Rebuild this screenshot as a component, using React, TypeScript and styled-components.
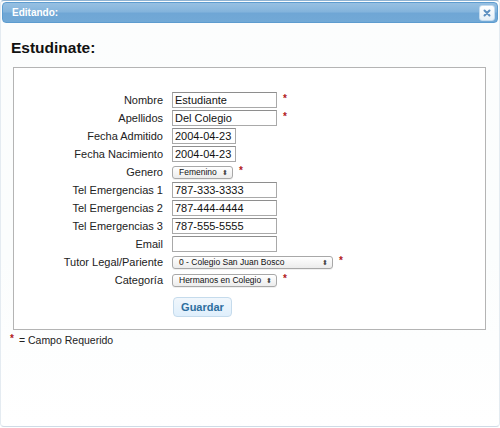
import * as React from 'react';
import styled, { createGlobalStyle } from 'styled-components';

const GlobalStyle = createGlobalStyle`
    html, body {
        margin: 0;
        padding: 0;
        background: #ffffff;
    }
    body {
        font-family: "Liberation Sans", Arial, sans-serif;
        font-size: 11px;
        color: #222;
    }
`;

const Dialog = styled.div`
    width: 500px;
    height: 427px;
    box-sizing: border-box;
    border: 1px solid #e4ebf1;
    border-top-color: #8fb3d3;
    border-bottom-color: #cfdbe6;
    border-radius: 4px;
    background: linear-gradient(#fcfdfd, #fbfdfd 60%, #ffffff);
    padding: 1px;
    display: flex;
    flex-direction: column;
`;

const TitleBar = styled.div`
    height: 21px;
    box-sizing: border-box;
    border: 1px solid #5d9ccf;
    border-radius: 4px;
    background: linear-gradient(#97c0e2 0%, #84b4dc 45%, #6fa6d5 55%, #72a9d6 100%);
    display: flex;
    align-items: center;
    justify-content: space-between;
    padding: 0 2px 0 9px;
`;

const Title = styled.span`
    color: #ffffff;
    font-weight: bold;
    font-size: 10px;
`;

const CloseButton = styled.button`
    width: 16px;
    height: 16px;
    padding: 0;
    border: 1px solid #c3dbef;
    border-radius: 3px;
    background: linear-gradient(#ffffff, #e6f0f8);
    display: flex;
    align-items: center;
    justify-content: center;
    cursor: pointer;
`;

const Body = styled.div`
    padding: 15px 12px 0 8px;
    display: flex;
    flex-direction: column;
`;

const Heading = styled.h2`
    margin: 0 0 9px 1px;
    font-size: 15.5px;
    font-weight: bold;
    color: #111;
    line-height: 20px;
`;

const FormBox = styled.div`
    margin-left: 3px;
    border: 1px solid #b4b4b4;
    background: #ffffff;
    height: 263px;
    box-sizing: border-box;
    padding-top: 24px;
`;

const FormGrid = styled.div`
    display: grid;
    grid-template-columns: 149px auto;
    column-gap: 9px;
    row-gap: 2px;
    align-items: center;
`;

const Label = styled.label`
    text-align: right;
    font-size: 11px;
    color: #222;
    line-height: 16px;
    white-space: nowrap;
`;

const Field = styled.div`
    display: flex;
    align-items: center;
    gap: 6px;
    height: 16px;
`;

const TextBox = styled.input<{ $w: number }>`
    width: ${(p) => p.$w}px;
    height: 16px;
    box-sizing: border-box;
    border: 1px solid #a9a9a9;
    border-top-color: #8e8e8e;
    padding: 0 2px;
    font-family: "Liberation Sans", Arial, sans-serif;
    font-size: 11px;
    color: #111;
    background: #fff;
    outline: none;
`;

const SelectBox = styled.div<{ $w: number }>`
    width: ${(p) => p.$w}px;
    height: 13px;
    box-sizing: border-box;
    border: 1px solid #a8a8a8;
    border-radius: 3px;
    background: linear-gradient(#ffffff, #ececec);
    display: flex;
    align-items: center;
    justify-content: space-between;
    padding: 0 4px 0 6px;
    font-size: 8.5px;
    color: #111;
    white-space: nowrap;
    box-shadow: 0 1px 0 rgba(0, 0, 0, 0.06);
`;

const Arrows = styled.span`
    font-size: 7px;
    color: #444;
    line-height: 1;
`;

const Required = styled.span`
    color: #b0191c;
    font-size: 10px;
    font-weight: bold;
    line-height: 1;
    position: relative;
    top: -1px;
`;

const ButtonRow = styled.div`
    padding: 9px 0 0 159px;
`;

const SaveButton = styled.button`
    width: 59px;
    height: 20px;
    border: 1px solid #c5dbec;
    border-radius: 4px;
    background: linear-gradient(#f1f7fc, #dfeffc);
    color: #2e6e9e;
    font-family: "Liberation Sans", Arial, sans-serif;
    font-weight: bold;
    font-size: 11px;
    padding: 0;
    cursor: pointer;
`;

const Note = styled.div`
    margin-top: 4px;
    font-size: 10.5px;
    color: #222;
    display: flex;
    gap: 5px;
    align-items: center;
`;

type Row = {
    label: string;
    kind: 'text' | 'select';
    value: string;
    width: number;
    required?: boolean;
};

const rows: Row[] = [
    { label: 'Nombre', kind: 'text', value: 'Estudiante', width: 105, required: true },
    { label: 'Apellidos', kind: 'text', value: 'Del Colegio', width: 105, required: true },
    { label: 'Fecha Admitido', kind: 'text', value: '2004-04-23', width: 64 },
    { label: 'Fecha Nacimiento', kind: 'text', value: '2004-04-23', width: 64 },
    { label: 'Genero', kind: 'select', value: 'Femenino', width: 61, required: true },
    { label: 'Tel Emergencias 1', kind: 'text', value: '787-333-3333', width: 105 },
    { label: 'Tel Emergencias 2', kind: 'text', value: '787-444-4444', width: 105 },
    { label: 'Tel Emergencias 3', kind: 'text', value: '787-555-5555', width: 105 },
    { label: 'Email', kind: 'text', value: '', width: 105 },
    { label: 'Tutor Legal/Pariente', kind: 'select', value: '0 - Colegio San Juan Bosco', width: 161, required: true },
    { label: 'Categoría', kind: 'select', value: 'Hermanos en Colegio', width: 105, required: true },
];

export default function App() {
    return (
        <>
            <GlobalStyle />
            <Dialog>
                <TitleBar>
                    <Title>Editando:</Title>
                    <CloseButton aria-label="Cerrar">
                        <svg width="8" height="8" viewBox="0 0 8 8">
                            <path d="M1.5 1.5 L6.5 6.5 M6.5 1.5 L1.5 6.5" stroke="#5c8fc0" strokeWidth="2" strokeLinecap="round" />
                        </svg>
                    </CloseButton>
                </TitleBar>
                <Body>
                    <Heading>Estudinate:</Heading>
                    <FormBox>
                        <FormGrid>
                            {rows.map((r) => (
                                <React.Fragment key={r.label}>
                                    <Label>{r.label}</Label>
                                    <Field>
                                        {r.kind === 'text' ? (
                                            <TextBox $w={r.width} defaultValue={r.value} />
                                        ) : (
                                            <SelectBox $w={r.width}>
                                                <span>{r.value}</span>
                                                <Arrows>⬍</Arrows>
                                            </SelectBox>
                                        )}
                                        {r.required && <Required>*</Required>}
                                    </Field>
                                </React.Fragment>
                            ))}
                        </FormGrid>
                        <ButtonRow>
                            <SaveButton>Guardar</SaveButton>
                        </ButtonRow>
                    </FormBox>
                    <Note>
                        <Required>*</Required>
                        <span>= Campo Requerido</span>
                    </Note>
                </Body>
            </Dialog>
        </>
    );
}
